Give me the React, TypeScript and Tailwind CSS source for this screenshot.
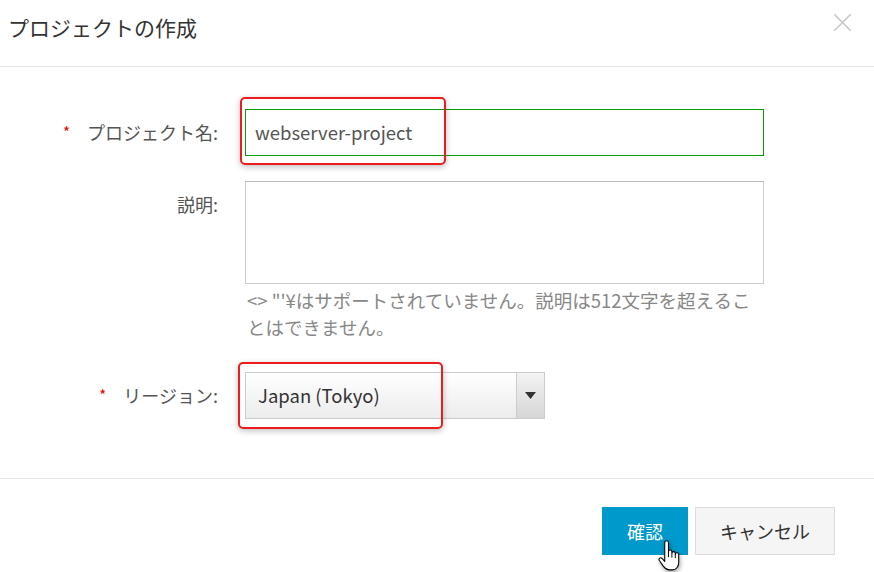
import { X } from "lucide-react";

const font = { fontFamily: '"Noto Sans CJK JP", "Liberation Sans", sans-serif' };

function Highlight({ className }: { className: string }) {
  return (
    <div
      className={`pointer-events-none absolute rounded-[5px] border-2 border-[#ee1c1c] shadow-[0_2px_6px_rgba(0,0,0,0.25)] ${className}`}
    />
  );
}

function HandCursor() {
  return (
    <svg
      width="24"
      height="32"
      viewBox="0 0 22 30"
      className="pointer-events-none absolute left-[55px] top-[33px] drop-shadow-[1px_2px_2px_rgba(0,0,0,0.35)]"
    >
      <path
        d="M7 2.5a1.75 1.75 0 0 1 3.5 0V11a1.6 1.6 0 0 1 3.2 0v1.5a1.6 1.6 0 0 1 3.2 0v1a1.6 1.6 0 0 1 3.2 0V21c0 4-2.5 7-6 7h-3c-2.5 0-4-1.5-5.5-3.5L1.8 19a1.6 1.6 0 0 1 2.6-1.8L7 20Z"
        fill="#fff"
        stroke="#000"
        strokeWidth="1"
        strokeLinejoin="round"
      />
      <path d="M10.5 11v5M13.7 12.5v4M16.9 13.5v3.5" stroke="#000" strokeWidth="0.9" fill="none" />
    </svg>
  );
}

function Label({ text, required }: { text: string; required?: boolean }) {
  return (
    <div className="flex h-[47px] w-[218px] shrink-0 items-center justify-end text-[18px] text-[#555]">
      {required && <span className="mr-[17px] text-[15px] text-[#e60000]">*</span>}
      <span>{text}:</span>
    </div>
  );
}

export default function App() {
  return (
    <div className="h-[572px] w-[874px] overflow-hidden bg-white" style={font}>
      <div className="flex h-[67px] items-start justify-between border-b border-[#e5e5e5] pl-2 pr-[16px]">
        <h1 className="mt-[12px] text-[21px] leading-[30px] text-[#333]">プロジェクトの作成</h1>
        <X className="mt-[7px] size-[31px] text-[#c8c8c8]" strokeWidth={1.3} />
      </div>

      <div className="flex h-[411px] flex-col pt-[42px]">
        <div className="flex">
          <Label text="プロジェクト名" required />
          <div className="relative ml-[27px]">
            {/* focused input: green frame */}
            <div className="w-[519px] bg-[#089c08] p-px">
              <div className="flex h-[45px] items-center bg-white px-[9px] text-[18.5px] text-[#555]">
                webserver-project
              </div>
            </div>
            <Highlight className="-left-[5px] -top-[12px] h-[68px] w-[206px]" />
          </div>
        </div>

        <div className="mt-[25px] flex">
          <Label text="説明" />
          <div className="ml-[27px] w-[519px]">
            <div className="h-[103px] border border-[#ccc] border-t-[#bbb] bg-white" />
            <p className="mt-[3px] whitespace-nowrap pl-[2px] text-[18.5px] leading-[27px] text-[#888]">
              &lt;&gt; "'¥はサポートされていません。説明は512文字を超えるこ
              <br />
              とはできません。
            </p>
          </div>
        </div>

        <div className="mt-[31px] flex">
          <Label text="リージョン" required />
          <div className="relative ml-[27px]">
            <div className="flex h-[47px] w-[300px] border border-[#ccc] bg-gradient-to-b from-white to-[#ececec]">
              <div className="flex flex-1 items-center px-[12px] text-[18.5px] text-[#333]">Japan (Tokyo)</div>
              <div className="flex w-[28px] items-center justify-center border-l border-[#ccc] bg-gradient-to-b from-[#f3f3f3] to-[#d6d6d6]">
                <svg width="11" height="7" viewBox="0 0 11 7">
                  <path d="M0 0h11L5.5 7Z" fill="#333" />
                </svg>
              </div>
            </div>
            <Highlight className="-left-[7px] -top-[10px] h-[67px] w-[205px]" />
          </div>
        </div>
      </div>

      <div className="flex justify-end gap-[7px] border-t border-[#e5e5e5] pr-[39px] pt-[28px]">
        <div className="relative">
          <button className="h-[48px] w-[86px] bg-[#0099cc] text-[18px] text-white">確認</button>
          <HandCursor />
        </div>
        <button className="h-[48px] w-[140px] border border-[#dcdcdc] bg-[#f5f5f5] text-[18px] text-[#333]">
          キャンセル
        </button>
      </div>
    </div>
  );
}
